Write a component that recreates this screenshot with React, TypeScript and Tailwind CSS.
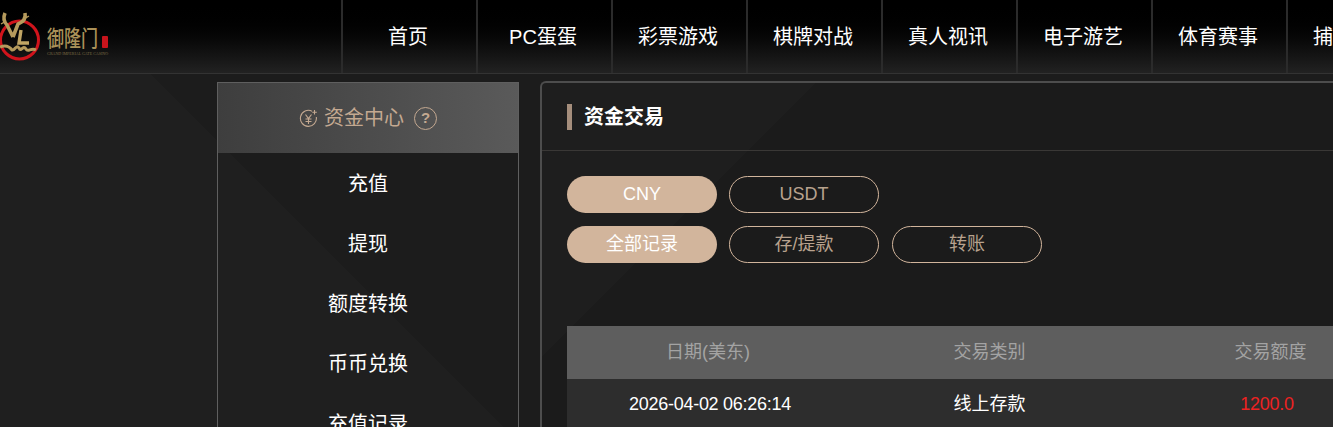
import React from 'react';

const navItems = ['首页', 'PC蛋蛋', '彩票游戏', '棋牌对战', '真人视讯', '电子游艺', '体育赛事', '捕鱼游戏'];
const sideItems = ['充值', '提现', '额度转换', '币币兑换', '充值记录'];

function Logo() {
  return (
    <div className="relative h-[73px] w-[341px] shrink-0">
      <svg className="absolute left-0 top-[10px]" width="42" height="54" viewBox="0 0 42 54" fill="none">
        <circle cx="19.5" cy="30" r="19" stroke="#d0141c" strokeWidth="3" />
        <path d="M5 3 C3 8 4 12 7 15 L13 27 M25 3 C26 8 23 12 18 14 L13 27" stroke="#b59a5c" strokeWidth="3.6" strokeLinejoin="round" />
        <path d="M1 14 L6 11 M24 9 L29 6" stroke="#b59a5c" strokeWidth="1.4" />
        <path d="M21 20 L19 33 L29 33" stroke="#c0a564" strokeWidth="3.4" />
        <path d="M0 37 C5 35 9 36 12 40 C15 41 16 34 19 38 C21 43 23 34 26 39 C28 43 31 37 36 40" stroke="#b59a5c" strokeWidth="3" />
      </svg>
      <span className="absolute left-[47px] top-[25px] h-[22px] origin-top scale-y-[1.3] whitespace-nowrap text-[17px] leading-[17px] font-medium text-[#ab9259] font-['Noto_Sans_CJK_SC',sans-serif]">
        御隆门
      </span>
      <div className="absolute left-[102px] top-[36px] h-[12px] w-[6px] rounded-[1px] bg-[#c8141c]" />
      <span className="absolute left-[47px] top-[52px] whitespace-nowrap text-[4px] leading-[4px] text-[#7d6b45] font-['Liberation_Serif',serif]">
        GRAND IMPERIAL GATE CASINO
      </span>
    </div>
  );
}

function Pill({ label, active }: { label: string; active?: boolean }) {
  return (
    <div
      className={
        active
          ? 'flex h-[37px] w-[150px] items-center justify-center rounded-[19px] bg-[#d2b59c] text-[18px] text-white'
          : 'flex h-[37px] w-[150px] items-center justify-center rounded-[19px] border border-[#d2b59c] text-[18px] text-[#b8a28e]'
      }
    >
      {label}
    </div>
  );
}

export default function App() {
  return (
    <div className="h-[427px] w-[1333px] overflow-hidden bg-[linear-gradient(45deg,#1f1f1f_0%,#1f1f1f_28.6%,#1c1c1c_28.6%,#1c1c1c_100%)] font-['Liberation_Sans','Noto_Sans_CJK_SC',sans-serif] text-white">
      <header className="flex h-[74px] border-b border-[#333] bg-gradient-to-b from-black to-[#222]">
        <Logo />
        {navItems.map((item) => (
          <div
            key={item}
            className="flex h-[73px] w-[135px] shrink-0 items-center justify-center whitespace-nowrap border-l-2 border-[#2b2b2b] pr-[3px] text-[20px]"
          >
            {item}
          </div>
        ))}
      </header>

      <div className="flex items-start pl-[217px] pt-2">
        <aside className="h-[400px] w-[302px] shrink-0 border border-b-0 border-[#5f5f5f]">
          <div className="flex h-[70px] items-center justify-center bg-gradient-to-r from-[#3e3e3e] to-[#5a5a5a] text-[20px] text-[#c4a991]">
            <svg width="19" height="19" viewBox="0 0 19 19" fill="none" stroke="#c4a991" strokeWidth="1.1">
              <path d="M13 2.2A8 8 0 1 0 17.3 8" />
              <path d="M6.5 5.5L9.5 9.5L12.5 5.5M9.5 9.5V15M6.5 10H12.5M6.5 12.5H12.5M15.5 1V5.5M13.3 3.2H17.8" />
            </svg>
            <span className="ml-[6px]">资金中心</span>
            <span className="ml-[10px] flex h-[23px] w-[23px] items-center justify-center rounded-full border border-[#c4a991] text-[15px] font-bold">
              ?
            </span>
          </div>
          {sideItems.map((item) => (
            <div key={item} className="flex h-[60px] items-center justify-center pt-[2px] text-[20px]">
              {item}
            </div>
          ))}
        </aside>

        <main className="ml-[21px] -mt-[1px] h-[400px] min-w-0 flex-1 rounded-tl-[6px] border-l-2 border-t-2 border-[#4d4d4d] bg-[linear-gradient(135deg,#1e1e1e_0%,#1e1e1e_23%,#1b1b1b_23%,#1b1b1b_100%)]">
          <div className="flex h-[68px] items-center border-b border-[#3a3836] pl-[25px]">
            <div className="h-[26px] w-[5px] bg-[#a58e7c]" />
            <h1 className="ml-3 text-[20px] font-bold">资金交易</h1>
          </div>
          <div className="flex gap-3 pl-[25px] pt-[25px]">
            <Pill label="CNY" active />
            <Pill label="USDT" />
          </div>
          <div className="mt-[13px] flex gap-3 pl-[25px]">
            <Pill label="全部记录" active />
            <Pill label="存/提款" />
            <div className="ml-[1px]">
              <Pill label="转账" />
            </div>
          </div>
          <div className="ml-[25px] mt-[63px] w-[843px]">
            <div className="grid h-[53px] grid-cols-3 items-center bg-[#5e5e5e] text-center text-[18px] text-[#a3a3a3]">
              <span className="pl-[1px]">日期(美东)</span>
              <span className="pl-[2px]">交易类别</span>
              <span className="pl-[2px]">交易额度</span>
            </div>
            <div className="grid h-[50px] grid-cols-3 items-center bg-[#2d2d2d] text-center text-[18px]">
              <span className="pl-[5px] tracking-[-0.28px]">2026-04-02 06:26:14</span>
              <span className="pl-[2px]">线上存款</span>
              <span className="pr-[5px] tracking-[-0.3px] text-[#ee2222]">1200.0</span>
            </div>
          </div>
        </main>
      </div>
    </div>
  );
}
